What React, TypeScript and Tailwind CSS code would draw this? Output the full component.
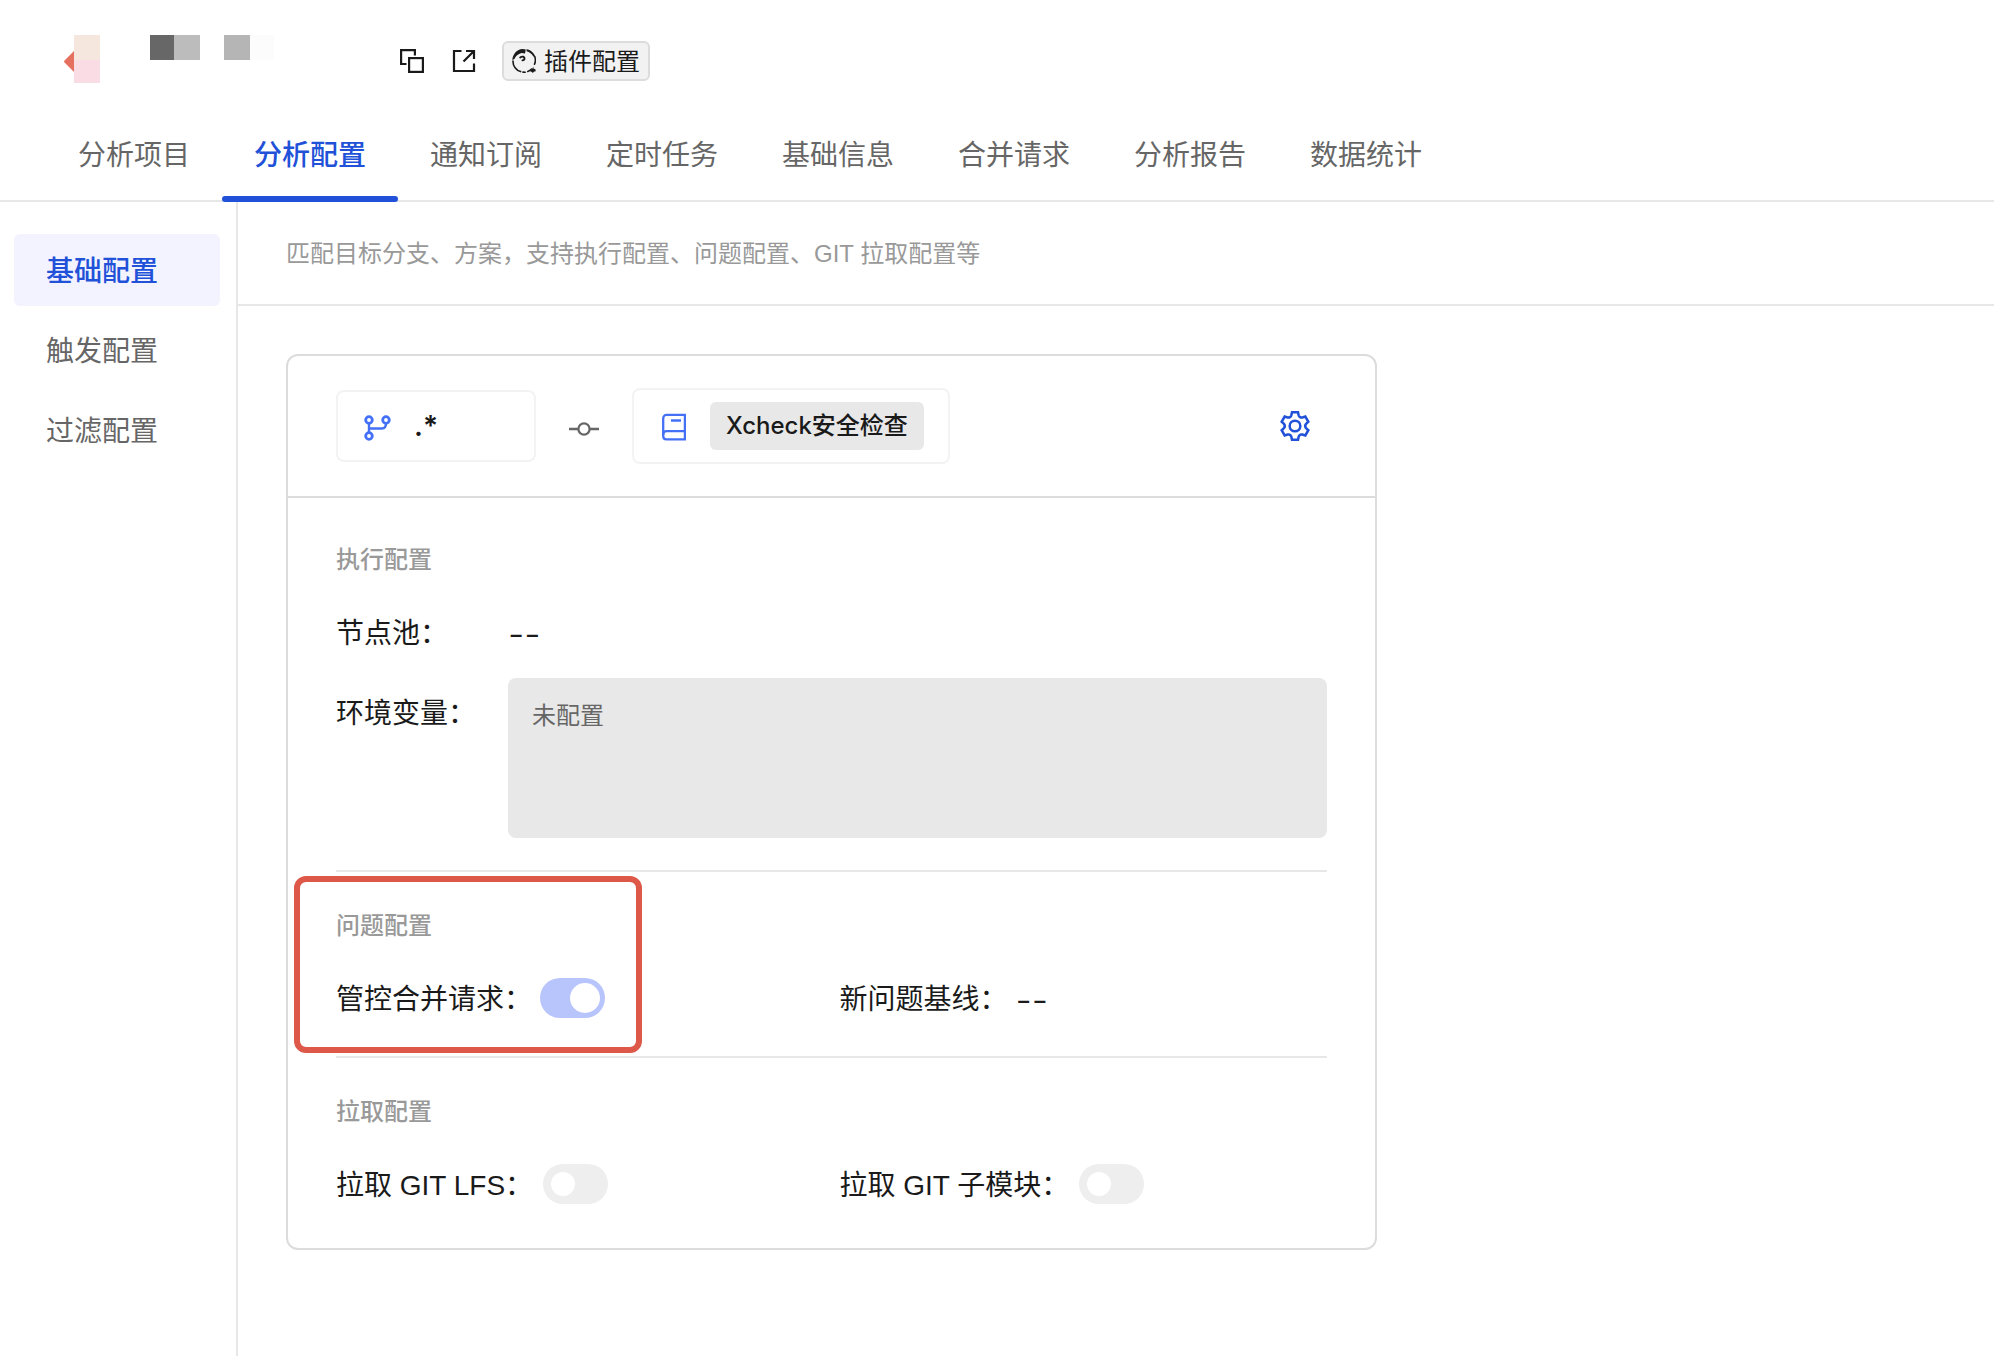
import React from "react";

const TABS = ["分析项目", "分析配置", "通知订阅", "定时任务", "基础信息", "合并请求", "分析报告", "数据统计"];
const SIDE_ITEMS = ["基础配置", "触发配置", "过滤配置"];

function rotate(x: number, y: number, deg: number) {
  const a = (deg * Math.PI) / 180;
  return `${(x * Math.cos(a) - y * Math.sin(a)).toFixed(2)} ${(x * Math.sin(a) + y * Math.cos(a)).toFixed(2)}`;
}

const GEAR_PATH =
  [0, 60, 120, 180, 240, 300]
    .map(
      (d, i) =>
        `${i === 0 ? "M" : "L"}${rotate(-9, -41, d)}L${rotate(9, -41, d)}L${rotate(11, -32, d)}A10 10 0 0 0 ${rotate(-11, -32, d + 60)}`
    )
    .join("") + "Z";

function GearIcon() {
  return (
    <svg className="size-[30px]" viewBox="-45 -45 90 90" fill="none" stroke="currentColor" strokeWidth="7.500">
      <path d={GEAR_PATH} />
      <circle r="16" />
    </svg>
  );
}

function CopyIcon() {
  return (
    <svg className="size-6" viewBox="0 0 24 24" fill="none" stroke="currentColor" strokeWidth="2.200">
      <path d="M6.500 15H1.100V1.100H14.900v5.400" />
      <rect x="9.100" y="9.100" width="13.800" height="13.800" />
    </svg>
  );
}

function JumpIcon() {
  return (
    <svg className="size-6" viewBox="0 0 24 24" fill="none" stroke="currentColor" strokeWidth="2.200">
      <path d="M9.500 2H2v20h20v-7.500" />
      <path d="M14 2h8v8M21.500 2.500L11.500 12.500" />
    </svg>
  );
}

function PluginIcon() {
  return (
    <svg className="size-6" viewBox="0 0 24 24" fill="none" stroke="currentColor" strokeWidth="1.600" strokeLinecap="round">
      <path d="M.3 11C.8 5 5 .4 10.500.1L13.800.6 13 4.600 9.500 3.900C6 4.800 3.600 7 2.400 10Z" fill="currentColor" stroke="none" />
      <path d="M14.500.2C18.500.8 22 3.600 23.300 7.800L21.300 7.400C19.800 4.900 17.500 3 14.600 2.300Z" fill="currentColor" stroke="none" />
      <path d="M22.700 7.500c1 2.700.9 5.300-.2 7.700M1 12c-.2 5 3.200 9.300 7.600 10.600M11 23.100l2.200.1M15.800 22.500c1.600-.6 2.800-1.400 3.800-2.500" />
      <path d="M8.200 8.400c2.200-1.600 4.600-.6 4.300 1.400-.2 1.200-1.200 1.700-2 1.500" strokeWidth="1.900" />
      <path d="M21.400 17.500v2l2 .8.300 2-2 .4-.7 1.300-1.600-1.300-1.800-.6 2.400-1.800Z" fill="currentColor" stroke="none" />
    </svg>
  );
}

function BranchIcon() {
  return (
    <svg className="size-7" viewBox="0 0 28 28" fill="none" stroke="currentColor" strokeWidth="2.800">
      <circle cx="5" cy="6" r="3.300" />
      <circle cx="22" cy="6" r="3.300" />
      <circle cx="5" cy="22" r="3.300" />
      <path d="M5 9v9.500M5 14.500H18c2.500 0 4-1.500 4-5.500" strokeWidth="2.400" />
    </svg>
  );
}

function CommitIcon() {
  return (
    <svg className="size-[30px]" viewBox="0 0 30 30" fill="none" stroke="currentColor" strokeWidth="2.300">
      <circle cx="15" cy="15" r="5.600" />
      <path d="M0 15h9.400M20.600 15H30" />
    </svg>
  );
}

function BookIcon() {
  return (
    <svg className="h-7 w-6" viewBox="0 0 24 28" fill="none" stroke="currentColor" strokeWidth="2.300">
      <path d="M4.500 1.900H22.900v24.500H4.500C2.500 26.400 1.200 25 1.200 23V5.500C1.200 3.500 2.500 1.900 4.500 1.900Z" />
      <path d="M1.200 22c0-2.500 1.300-3.900 3.300-3.900H23M9 7.500h10" />
    </svg>
  );
}

function Switch({ id, on = false }: { id: string; on?: boolean }) {
  return (
    <input
      id={id}
      type="checkbox"
      role="switch"
      defaultChecked={on}
      className="flex h-10 w-[65px] shrink-0 cursor-pointer appearance-none items-center rounded-full bg-[#eeeeee] px-2 before:size-6 before:rounded-full before:bg-white before:content-[''] checked:justify-end checked:bg-[#b8c5fc] checked:px-[5px] checked:before:size-[30px]"
    />
  );
}

function SectionTitle({ children }: { children: React.ReactNode }) {
  return <h2 className="mb-8 text-2xl/9 font-medium text-[#999999]">{children}</h2>;
}

function EmptyValue() {
  return <span className="pt-1 font-['Inter'] text-4xl/10 font-light">--</span>;
}

function Mosaic() {
  return (
    <div className="flex w-[334px] items-start pl-16" aria-hidden="true">
      <svg className="mt-4 h-[21px] w-2.5" viewBox="0 0 10 21">
        <path d="M10 0v21L.5 11.500q-.8-1 0-2Z" fill="#e5705f" />
      </svg>
      <div className="w-[26px]">
        <div className="h-[25px] bg-[#f5e6de]" />
        <div className="h-[23px] bg-[#fadce5]" />
      </div>
      <div className="ml-[50px] h-[25px] w-6 bg-[#676767]" />
      <div className="h-[25px] w-[26px] bg-[#bcbcbc]" />
      <div className="ml-6 h-[25px] w-[26px] bg-[#b5b5b5]" />
      <div className="h-[25px] w-6 bg-[#fcfcfc]" />
    </div>
  );
}

export default function App() {
  return (
    <div className="flex min-h-screen flex-col bg-white font-['Liberation_Sans','Noto_Sans_CJK_SC',sans-serif] text-[#1a1a1a]">
      <header className="border-b-2 border-[#e7e7e7]">
        <div className="flex h-[106px] items-start pt-[35px]">
          <Mosaic />
          <div className="-mt-7 flex h-[108px] items-center pl-[66px]">
            <button type="button" aria-label="复制">
              <CopyIcon />
            </button>
            <button type="button" aria-label="打开" className="ml-7">
              <JumpIcon />
            </button>
            <button
              type="button"
              className="ml-[26px] flex h-10 items-center gap-2 rounded-md border-2 border-[#dcdcdc] bg-[#f2f2f2] px-2 text-2xl/8"
            >
              <PluginIcon />
              <span className="pt-0.5">插件配置</span>
            </button>
          </div>
        </div>
        <nav className="-mb-0.5 flex pl-[46px]">
          {TABS.map((tab, i) => (
            <a
              key={tab}
              href="#"
              className={
                i === 1
                  ? "relative flex h-24 items-center px-8 pt-1 text-[28px]/10 font-medium text-[#2151d8] after:absolute after:inset-x-0 after:bottom-0 after:h-1.5 after:rounded-full after:bg-[#2151d8]"
                  : "flex h-24 items-center px-8 pt-1 text-[28px]/10 text-[#666666]"
              }
            >
              {tab}
            </a>
          ))}
        </nav>
      </header>

      <div className="flex flex-1">
        <aside className="w-[238px] shrink-0 border-r-2 border-[#e7e7e7] pt-8 pr-4 pl-3.5">
          <nav className="flex flex-col gap-2">
            {SIDE_ITEMS.map((item, i) => (
              <a
                key={item}
                href="#"
                className={
                  i === 0
                    ? "flex h-[72px] items-center rounded-md bg-[#f3f3ff] px-8 pt-1 text-[28px]/10 font-medium text-[#2151d8]"
                    : "flex h-[72px] items-center rounded-md px-8 pt-1 text-[28px]/10 text-[#666666]"
                }
              >
                {item}
              </a>
            ))}
          </nav>
        </aside>

        <main className="min-w-0 flex-1">
          <p className="flex h-[104px] items-center border-b-2 border-[#e7e7e7] px-12 pt-0.5 text-2xl/8 text-[#999999]">
            匹配目标分支、方案，支持执行配置、问题配置、GIT 拉取配置等
          </p>

          <div className="p-12">
            <div className="w-full max-w-[1091px] rounded-xl border-2 border-[#dcdcdc]">
              <div className="flex h-[142px] items-center border-b-2 border-[#dcdcdc] px-12">
                <div className="flex h-[72px] w-[200px] items-center gap-[22px] rounded-lg border-2 border-[#f3f3f3] px-[26px]">
                  <span className="pt-1 text-[#4470f5]">
                    <BranchIcon />
                  </span>
                  <span className="font-['Inter'] text-[28px]/10 font-semibold">.*</span>
                </div>
                <span className="mx-[33px] pt-1.5 text-[#666666]">
                  <CommitIcon />
                </span>
                <div className="flex h-[76px] items-center gap-6 rounded-lg border-2 border-[#f3f3f3] pr-6 pl-7">
                  <span className="pt-0.5 text-[#4470f5]">
                    <BookIcon />
                  </span>
                  <span className="flex h-12 items-center rounded-md bg-[#e8e8e8] px-4 font-['Inter','Noto_Sans_CJK_SC',sans-serif] text-2xl/8 font-medium">
                    Xcheck安全检查
                  </span>
                </div>
                <button type="button" aria-label="设置" className="mr-[17px] ml-auto text-[#2151d8]">
                  <GearIcon />
                </button>
              </div>

              <div className="px-12 text-[28px]/10">
                <section className="pt-11 pb-8">
                  <SectionTitle>执行配置</SectionTitle>
                  <div className="mb-6 flex h-11 items-center">
                    <span className="w-[172px] shrink-0 pt-1">节点池：</span>
                    <EmptyValue />
                  </div>
                  <div className="flex items-start">
                    <label htmlFor="env" className="w-[172px] shrink-0 pt-4">
                      环境变量：
                    </label>
                    <textarea
                      id="env"
                      readOnly
                      defaultValue="未配置"
                      className="h-40 min-w-0 flex-1 resize-none rounded-lg bg-[#e8e8e8] px-6 py-5 text-2xl/9 text-[#666666] outline-none"
                    />
                  </div>
                </section>

                <section className="relative border-t-2 border-[#e7e7e7] py-9">
                  <SectionTitle>问题配置</SectionTitle>
                  <div className="grid grid-cols-2 gap-4">
                    <div className="flex h-11 items-center gap-2">
                      <label htmlFor="merge" className="pt-1">管控合并请求：</label>
                      <Switch id="merge" on />
                    </div>
                    <div className="flex h-11 items-center gap-2">
                      <span className="pt-1">新问题基线：</span>
                      <EmptyValue />
                    </div>
                  </div>
                  <div className="pointer-events-none absolute top-1 bottom-[3px] -left-[42px] w-[348px] rounded-xl border-6 border-[#dd5848]" />
                </section>

                <section className="border-t-2 border-[#e7e7e7] pt-9 pb-[42px]">
                  <SectionTitle>拉取配置</SectionTitle>
                  <div className="grid grid-cols-2 gap-4">
                    <div className="flex h-11 items-center gap-2.5">
                      <label htmlFor="lfs" className="pt-1">拉取 GIT LFS：</label>
                      <Switch id="lfs" />
                    </div>
                    <div className="flex h-11 items-center gap-2.5">
                      <label htmlFor="submodule" className="pt-1">拉取 GIT 子模块：</label>
                      <Switch id="submodule" />
                    </div>
                  </div>
                </section>
              </div>
            </div>
          </div>
        </main>
      </div>
    </div>
  );
}
